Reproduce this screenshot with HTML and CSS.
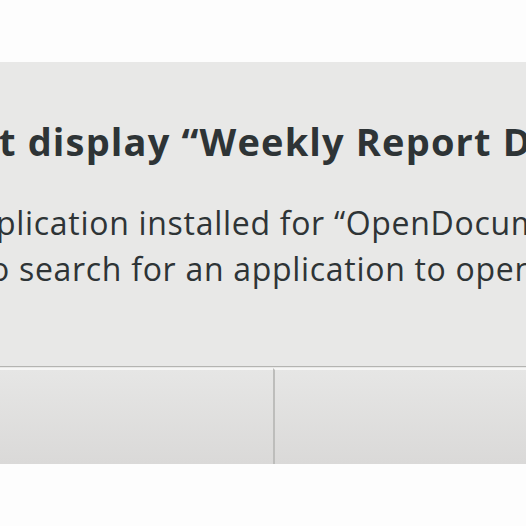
FILE: index.html
```html
<!DOCTYPE html>
<html>
<head>
<meta charset="utf-8">
<link rel="stylesheet" href="styles.css">
</head>
<body>
<div class="top"></div>
<div class="dialog">
  <div class="content">
    <h1 class="title">t display “Weekly Report Draft.odt”</h1>
    <p class="msg line1">plication installed for “OpenDocument Text” files.</p>
    <p class="msg line2">o search for an application to open this file?</p>
  </div>
  <div class="buttons">
    <div class="btn btn-left"></div>
    <div class="btn btn-right"></div>
  </div>
</div>
<div class="bottom"></div>
</body>
</html>
```
FILE: styles.css
```css
html, body {
  margin: 0;
  padding: 0;
  background: #fdfdfd;
  overflow: hidden;
  width: 526px;
  height: 526px;
}
.top {
  height: 62px;
  background: #fdfdfd;
}
.dialog {
  background: #e8e8e7;
  font-family: "Open Sans", "Noto Sans", sans-serif;
  color: #2e3436;
}
.content {
  height: 304px;
  overflow: hidden;
  box-sizing: border-box;
  padding-top: 56px;
}
.title {
  margin: 0;
  font-size: 38px;
  font-weight: 700;
  letter-spacing: 1.15px;
  line-height: 46px;
  white-space: nowrap;
  text-indent: -1px;
}
.msg {
  margin: 0;
  font-size: 32px;
  letter-spacing: 0.7px;
  line-height: 46px;
  white-space: nowrap;
}
.line1 {
  margin-top: 36px;
  text-indent: -4px;
}
.line2 {
  text-indent: -10px;
}
.buttons {
  display: flex;
  height: 97px;
  border-top: 1px solid #b4b4b1;
}
.btn {
  border-top: 2px solid #f6f6f5;
  margin-top: 1px;
  background: linear-gradient(#e6e6e5, #dad9d8);
}
.btn-left {
  width: 273px;
}
.btn-right {
  flex: 1;
  border-left: 2px solid #bdbdbb;
}
.bottom {
  height: 63px;
  background: #fdfdfd;
}
```
